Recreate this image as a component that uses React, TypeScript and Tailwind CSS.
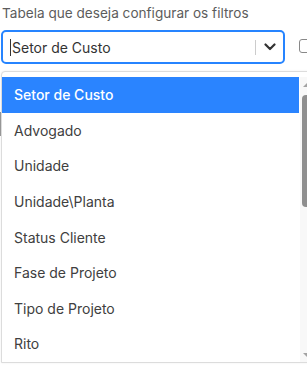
import React from "react";

const items = [
  "Setor de Custo",
  "Advogado",
  "Unidade",
  "Unidade\\Planta",
  "Status Cliente",
  "Fase de Projeto",
  "Tipo de Projeto",
  "Rito",
];

export default function App() {
  return (
    <div
      className="relative w-[307px] h-[367px] overflow-hidden bg-white"
      style={{ fontFamily: "Inter, 'Noto Sans', sans-serif" }}
    >
      <div className="pl-[2px] pt-[4px] text-[13.6px] leading-[18px] text-[#5c5c5c]">
        Tabela que deseja configurar os filtros
      </div>
      <div className="mt-[8px] flex items-start">
        <div className="ml-[1px] flex h-[34px] w-[284px] shrink-0 items-center rounded-[5px] border-2 border-[#2684ff] bg-white">
          <div className="flex flex-1 items-center pl-[7px] text-[14px] text-[#333]">
            <span className="mr-[1px] inline-block h-[17px] w-[1px] bg-[#333]" />
            Setor de Custo
          </div>
          <div className="h-[15px] w-[1px] bg-[#ccc]" />
          <div className="flex w-[27px] items-center justify-center">
            <svg width="12" height="8" viewBox="0 0 12 8">
              <path d="M1.5 1.5 L6 6 L10.5 1.5" fill="none" stroke="#333" strokeWidth="2.2" strokeLinecap="round" strokeLinejoin="round" />
            </svg>
          </div>
        </div>
        <div className="ml-[14px] mt-[9px] h-[14px] w-[14px] shrink-0 rounded-[3px] border border-[#888]" />
      </div>
      <div className="mt-[48px] h-[24px] w-[2px] bg-[#9a9a9a]" />

      <div className="absolute left-[1px] top-[71px] flex w-[330px] rounded-t-[4px] border border-[#dcdcdc] bg-white pt-[5px] shadow-[0_0_2px_rgba(0,0,0,0.08)]">
        <div className="w-[297px] shrink-0">
          {items.map((it, i) => (
            <div
              key={it}
              className={
                i === 0
                  ? "flex h-[35.6px] items-center bg-[#2a84ff] pl-[12px] text-[14px] font-medium text-white"
                  : "flex h-[35.6px] items-center pl-[12px] text-[14px] text-[#404040]"
              }
            >
              {it}
            </div>
          ))}
        </div>
        <div className="relative ml-[1px] flex w-[15px] shrink-0 flex-col items-start bg-[#f8f8f8]">
          <div className="ml-[3px] mt-[6px] h-0 w-0 border-x-[4px] border-b-[4px] border-x-transparent border-b-[#a3a3a3]" />
          <div className="ml-[2px] mt-[8px] h-[112px] w-[9px] rounded-[4px] bg-[#8f8f8f]" />
          <div className="ml-[3px] mt-[146px] h-0 w-0 border-x-[4px] border-t-[4px] border-x-transparent border-t-[#a3a3a3]" />
        </div>
      </div>
    </div>
  );
}
